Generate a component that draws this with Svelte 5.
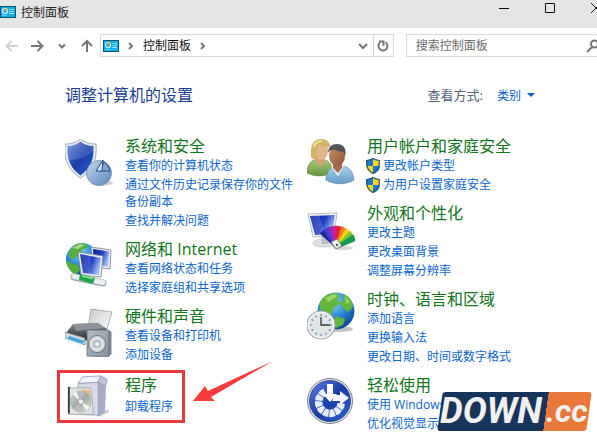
<script>
  const left = [
    { title: '系统和安全', icon: 'security', links: ['查看你的计算机状态', '通过文件历史记录保存你的文件备份副本', '查找并解决问题'] },
    { title: '网络和 Internet', icon: 'network', links: ['查看网络状态和任务', '选择家庭组和共享选项'] },
    { title: '硬件和声音', icon: 'hardware', links: ['查看设备和打印机', '添加设备'] },
    { title: '程序', icon: 'programs', links: ['卸载程序'], marked: true }
  ];
  const right = [
    { title: '用户帐户和家庭安全', icon: 'users', links: ['更改帐户类型', '为用户设置家庭安全'], admin: true },
    { title: '外观和个性化', icon: 'appearance', links: ['更改主题', '更改桌面背景', '调整屏幕分辨率'] },
    { title: '时钟、语言和区域', icon: 'clock', links: ['添加语言', '更换输入法', '更改日期、时间或数字格式'] },
    { title: '轻松使用', icon: 'ease', links: ['使用 Windows 建议的设置', '优化视觉显示'] }
  ];
  const columns = [left, right];
  const swatches = ['#1f2a9c', '#3c3fd0', '#8a2cc4', '#d01f96', '#e3222c', '#f07a16', '#efd51b', '#7fc92a', '#159c4c'];
  const spokes = [110, 140, 170, 200, 230, 260, 290, 320];
  const ticks = [0, 30, 60, 90, 120, 150, 180, 210, 240, 270, 300, 330];
</script>

{#snippet panelIcon()}
  <svg class="panel-icon" viewBox="0 0 16 12" aria-hidden="true">
    <rect x=".5" y=".5" width="15" height="11" fill="#12b0ec" stroke="#0b5277" />
    <circle cx="5" cy="5" r="2.5" fill="none" stroke="#d8f5ff" stroke-width="1.2" />
    <path d="M5 5V2.300A2.700 2.700 0 0 1 7.700 5z" fill="#e8a33c" />
    <path d="M9.500 3.500h1M11.500 3.500h2M9.500 5.500h1M11.500 5.500h2M9.500 7.500h4M3 9.500h1.500M5.500 9.500h1" stroke="#c9f1ff" />
  </svg>
{/snippet}

{#snippet bigIcon(name)}
  <svg class="big-icon" viewBox="0 0 48 48" aria-hidden="true">
    {#if name === 'security'}
      <ellipse cx="37" cy="44" rx="11" ry="3" fill="#999" opacity=".4" />
      <path d="M15.500 0C11 4 6 5 0 5c-1 15 2 25 15.500 34C29 30 32 20 31 5c-5 0-11-1-15.500-5z" fill="#e9edf2" stroke="#8994a6" stroke-width=".8" />
      <path d="M15.500 2.500C12 5.500 7.500 7 2.500 7c-.5 14 2.500 21.500 13 29.500 10.500-8 13.500-15.500 13-29.500-4.500 0-9.500-1.500-13-4.500z" fill="url(#blue)" />
      <path d="M15.500 2.500C12 5.500 7.500 7 2.500 7c-.2 6 .2 10 1.500 14 9 0 17-3 24.300-9V7c-4 0-9.300-1.500-12.800-4.500z" fill="#fff" opacity=".15" />
      <circle cx="34" cy="34" r="12.500" fill="url(#steel)" stroke="#607fab" stroke-width=".7" />
      <path d="M35 32l4-9c3 2 5 5 6 9z" fill="#7fa5d6" stroke="#28488a" />
      <path d="M31 32l7-11-1 11z" fill="#dce9f7" stroke="#28488a" />
    {:else if name === 'network'}
      <circle cx="17" cy="17" r="16" fill="url(#globe)" />
      <path d="M4 9l7-7 8-1 4 4-6 3-1 5-6 3-5 1zM1 18l7 4 5 1 2 5-4 5C5 30 2 25 1 18z" fill="#57ad3c" />
      <path d="M7 6l8-4 5 1-7 4z" fill="#c5eda2" opacity=".7" />
      <path d="M26 5l20 3-1 19-17-2z" fill="#e6eaee" stroke="#78838e" stroke-width=".8" />
      <path d="M28 7l16 2.500-1 15L29 23z" fill="url(#screen)" />
      <path d="M13 10l25 4-2 21-20-2z" fill="#edf0f3" stroke="#78838e" stroke-width=".8" />
      <path d="M15 12l21 4-2 17-16-2z" fill="url(#screen)" />
      <path d="M15 12l11 2-1 18-7-1z" fill="#fff" opacity=".15" />
      <path d="M9 35l29 6" stroke="#a2aab0" stroke-width="7" stroke-linecap="round" />
      <path d="M9 34.500l29 6" stroke="#e9eef0" stroke-width="5" stroke-linecap="round" />
      <path d="M15 32l15 4-2 6-14-4z" fill="#1fa64a" />
      <path d="M17 34l11 2.500" stroke="#90e6a0" stroke-width="1.500" />
    {:else if name === 'hardware'}
      <path d="M26 0l21 3-6 20-18-3z" fill="url(#paper)" stroke="#989fa5" stroke-width=".8" />
      <path d="M8 15l25-1 9 6-2 9-24 3L1 24z" fill="url(#dark)" />
      <path d="M8 15l25-1 7 5-29 3z" fill="#8d9398" />
      <path d="M0 23l20 6v7L0 29z" fill="#d3d8dc" stroke="#62696e" stroke-width=".6" />
      <path d="M4 27l16 5-4 4-14-5z" fill="#42a8de" />
      <path d="M2 31l15 5" stroke="#eee" stroke-width="2" />
      <path d="M22 21h21l3 2v22l-3 3-21-1z" fill="url(#speaker)" stroke="#646f79" stroke-width=".8" />
      <path d="M43 21l3 2v22l-3 3z" fill="#7a858f" />
      <circle cx="32" cy="35" r="8.500" fill="#d6dce0" stroke="#66727c" />
      <circle cx="32" cy="35" r="5" fill="#b4bdc4" stroke="#eef1f3" />
      <circle cx="32" cy="35" r="2" fill="#f2f4f5" />
    {:else if name === 'programs'}
      <path d="M32 44l14-7-1 4-9 4z" fill="#aaa" opacity=".6" />
      <path d="M12 9l22-1 1 36-23-1z" fill="#d9d9ee" stroke="#9498b4" stroke-width=".8" />
      <path d="M34 8l8 4-1 28-7 5z" fill="#a9abc9" stroke="#9094b1" stroke-width=".6" />
      <path d="M12 9l5-7 20-1-3 7z" fill="#f2f2fd" stroke="#8b90af" stroke-width=".8" />
      <path d="M37 1l7 4-2 7-8-4z" fill="#c3c4dd" stroke="#8b90af" stroke-width=".8" />
      <path d="M2 14h24l3 29H2z" fill="#dce3df" fill-opacity=".88" stroke="#969d98" stroke-width=".8" />
      <path d="M2 13v29" stroke="#30343a" stroke-width="2" />
      <path d="M17 15l8 2 1 8-7-3z" fill="#edbb7c" />
      <circle cx="15" cy="29" r="11.500" fill="url(#disc)" stroke="#a7b0ad" stroke-width=".6" />
      <path d="M15 29L6 21l4-3zM15 29l10 6-4 4z" fill="#fff" opacity=".8" />
      <path d="M15 29l-1-11 5 1zM15 29l-3 11-5-3z" fill="#d6bada" opacity=".6" />
      <circle cx="15" cy="29" r="3" fill="#eef1ef" stroke="#8e9994" />
    {:else if name === 'users'}
      <path d="M0 32c1-8 5-12 13-12s12 5 13 13c-8 5-18 5-26 1z" fill="url(#green)" stroke="#638049" stroke-width=".6" />
      <path d="M9 17h8v7l-4 4-4-4z" fill="#d4a276" />
      <ellipse cx="14" cy="12" rx="7" ry="9" fill="#e1b68b" />
      <path d="M4 18C3 5 7 0 14 0c6 0 9 3 9 8-6 0-9-2-11-3-2 4-2 8-1 15-3 1-5 1-7-2z" fill="#d0b466" />
      <path d="M7 8c1-4 4-6 8-6" stroke="#f4e29b" fill="none" stroke-width="2" />
      <path d="M19 41c0-9 4-14 14-14 9 0 13 5 14 14-8 5-20 5-28 0z" fill="url(#shirt)" stroke="#56809d" stroke-width=".6" />
      <path d="M24 28l7 9 6-10z" fill="#ecf2f6" />
      <path d="M26 23h9v6l-4 5-5-5z" fill="#a76d48" />
      <ellipse cx="30" cy="17" rx="8" ry="10" fill="url(#skin)" />
      <path d="M21 14c0-6 4-9 9-9 7 0 10 5 8 12l-2-4c-6 0-8-3-10-2-3 0-4 1-5 3z" fill="#555" />
    {:else if name === 'appearance'}
      <ellipse cx="17" cy="37" rx="11" ry="4" fill="#dfe1e3" stroke="#adb1b5" stroke-width=".6" />
      <path d="M14 29l9 1-2 8h-6z" fill="#b9bfc5" />
      <path d="M1 8l29-1-3 23-21 1z" fill="#f0f2f4" stroke="#a5abb1" stroke-width=".8" />
      <path d="M3 10l25-1-3 19-17 1z" fill="url(#screen)" />
      <path d="M3 10l9-.5 7 18.500-11 1z" fill="#fff" opacity=".15" />
      <ellipse cx="36" cy="42" rx="10" ry="2" fill="#999" opacity=".4" />
      {#each swatches as colour, i}
        <path d="M28 41l-2-21h7l-2 21z" fill={colour} transform={`rotate(${i * 13 - 42} 29 41)`} />
      {/each}
      <path d="M24 36l6-3 5 7-6 3z" fill="#f4f4f4" stroke="#666" stroke-width=".8" />
      <circle cx="30" cy="39" r="1.200" fill="#555" />
    {:else if name === 'clock'}
      <ellipse cx="32" cy="37" rx="14" ry="3" fill="#888" opacity=".5" />
      <circle cx="29" cy="19" r="18.500" fill="url(#globe)" />
      <path d="M13 11c2-6 8-10 15-10l5 3-3 4 3 3-7 6-2 8-6-4-5-4zM37 2c5 2 8 7 9 13l-5 5-5-4-4-5 5-3zM29 24l9 3-2 6-7 3-3-6z" fill="#61b63c" />
      <path d="M18 6l9-4 4 2-10 6zM38 4l5 6-4 2z" fill="#b2df72" opacity=".7" />
      <circle cx="14" cy="33" r="14" fill="#f3f5f6" stroke="#a1a8ad" stroke-width="1.200" />
      <circle cx="14" cy="33" r="12" fill="#dfe6e8" />
      {#each ticks as angle}
        <path d="M14 22v2" stroke="#62686c" transform={`rotate(${angle} 14 33)`} />
      {/each}
      <path d="M14 25v8h9" fill="none" stroke="#30363b" stroke-width="1.300" />
    {:else}
      <circle cx="23" cy="23" r="22.500" fill="#e3e7ec" stroke="#6f7480" stroke-width=".9" />
      <circle cx="23" cy="23" r="20.500" fill="url(#blue)" stroke="#162d75" stroke-width=".7" />
      {#each spokes as angle}
        <path d="M19.500 9.500q3.500-1.500 7 0L24.700 16.500h-3.400z" fill="#e7edf5" transform={`rotate(${angle} 23 24)`} />
      {/each}
      <path d="M20 6h6v10h4l-7 8-7-8h4z" fill="#fff" />
      <path d="M28 17h5v-4l9 7-9 7v-4h-8z" fill="#f4f7fb" />
    {/if}
  </svg>
{/snippet}

<svg class="defs" aria-hidden="true">
  <defs>
    <linearGradient id="blue" x2="1" y2="1"><stop stop-color="#5f86df" /><stop offset=".5" stop-color="#1a3ca8" /><stop offset="1" stop-color="#2e65d2" /></linearGradient>
    <linearGradient id="steel" x2="1" y2="1"><stop stop-color="#c4d7ed" /><stop offset="1" stop-color="#5c86bd" /></linearGradient>
    <radialGradient id="globe" cx=".4" cy=".25" r=".8"><stop stop-color="#8fdcf8" /><stop offset=".5" stop-color="#2f8bd5" /><stop offset="1" stop-color="#093f91" /></radialGradient>
    <linearGradient id="screen" x2="1" y2=".4"><stop stop-color="#071e96" /><stop offset=".6" stop-color="#2440c9" /><stop offset="1" stop-color="#9fbbef" /></linearGradient>
    <linearGradient id="paper" x2="1" y2="1"><stop stop-color="#c6cacd" /><stop offset="1" stop-color="#fff" /></linearGradient>
    <linearGradient id="dark" x2="0" y2="1"><stop stop-color="#858b91" /><stop offset="1" stop-color="#25292d" /></linearGradient>
    <linearGradient id="speaker" x2="1" y2="1"><stop stop-color="#b3bdc6" /><stop offset="1" stop-color="#818e99" /></linearGradient>
    <linearGradient id="disc" x2="1" y2="1"><stop stop-color="#cbd6cf" /><stop offset=".5" stop-color="#9eaaa3" /><stop offset="1" stop-color="#dce5dd" /></linearGradient>
    <linearGradient id="green" x2="0" y2="1"><stop stop-color="#a9ca7b" /><stop offset="1" stop-color="#66963c" /></linearGradient>
    <linearGradient id="shirt" x2="0" y2="1"><stop stop-color="#abd1ec" /><stop offset="1" stop-color="#649cc7" /></linearGradient>
    <linearGradient id="skin" x2="1" y2="1"><stop stop-color="#cb946a" /><stop offset="1" stop-color="#8b5233" /></linearGradient>
  </defs>
</svg>

<div class="window">
  <header class="titlebar">
    {@render panelIcon()}
    <span class="caption">控制面板</span>
    <div class="controls">
      <button aria-label="最小化"><svg viewBox="0 0 12 12"><path d="M1 6.500h10" /></svg></button>
      <button aria-label="最大化"><svg viewBox="0 0 12 12"><path d="M1.500 1.500h9v9h-9z" /></svg></button>
      <button aria-label="关闭"><svg viewBox="0 0 12 12"><path d="M1 1l10 10M11 1L1 11" /></svg></button>
    </div>
  </header>

  <nav class="toolbar">
    <div class="history">
      <button class="off" aria-label="后退"><svg viewBox="0 0 14 14"><path d="M13 7H2M6.500 2L1.500 7l5 5" /></svg></button>
      <button aria-label="前进"><svg viewBox="0 0 14 14"><path d="M1 7h11M7.500 2l5 5-5 5" /></svg></button>
      <button class="recent" aria-label="最近浏览的位置"><svg viewBox="0 0 14 14"><path d="M4 5.500l3 3 3-3" /></svg></button>
      <button aria-label="上移"><svg viewBox="0 0 14 14"><path d="M7 13V2M2 7l5-5 5 5" /></svg></button>
    </div>
    <div class="address">
      {@render panelIcon()}
      <svg class="crumb" viewBox="0 0 8 8"><path d="M2 1l3 3-3 3" /></svg>
      <a href="#panel">控制面板</a>
      <svg class="crumb" viewBox="0 0 8 8"><path d="M2 1l3 3-3 3" /></svg>
      <button class="drop" aria-label="以前的位置"><svg viewBox="0 0 14 14"><path d="M3 5l4 4 4-4" /></svg></button>
      <button class="refresh" aria-label="刷新"><svg viewBox="0 0 14 14"><path d="M4 3.500A4.500 4.500 0 1 0 9.500 3.200M3 2.500h4.500V7" /></svg></button>
    </div>
    <div class="search">
      <input type="search" aria-label="搜索控制面板" placeholder="搜索控制面板" />
      <svg viewBox="0 0 14 14" aria-hidden="true"><circle cx="8.500" cy="5" r="3.500" /><path d="M6 8l-5 5" /></svg>
    </div>
  </nav>

  <main>
    <div class="heading">
      <h1>调整计算机的设置</h1>
      <label for="view">查看方式:</label>
      <span class="picker">
        <select id="view"><option>类别</option><option>大图标</option><option>小图标</option></select>
        <svg viewBox="0 0 8 4" aria-hidden="true"><path d="M0 0h8L4 4z" /></svg>
      </span>
    </div>

    <div class="columns">
      {#each columns as groups}
        <div class="column">
          {#each groups as group}
            <section class:marked={group.marked}>
              {@render bigIcon(group.icon)}
              <div class="text">
                <h2><a href="#{group.icon}">{group.title}</a></h2>
                <ul>
                  {#each group.links as link}
                    <li class:admin={group.admin}>
                      {#if group.admin}
                        <svg class="uac" viewBox="0 0 14 16" aria-hidden="true">
                          <path d="M7 0C5 1.500 3 2 0 2c0 7 1 11 7 14z" fill="#1b77c8" />
                          <path d="M7 0c2 1.500 4 2 7 2 0 7-1 11-7 14z" fill="#f6d62c" />
                          <path d="M0 8c.5 4 2.500 6.500 7 8V8z" fill="#f6d62c" />
                          <path d="M14 8c-.5 4-2.500 6.500-7 8V8z" fill="#1b77c8" />
                          <path d="M7 .6C5 2 3 2.500.6 2.500 .6 9 1.500 12.500 7 15.400 12.500 12.500 13.400 9 13.400 2.500 11 2.500 9 2 7 .6z" fill="none" stroke="#24577f" stroke-width="1.200" />
                        </svg>
                      {/if}
                      <a href="#{link}">{link}</a>
                    </li>
                  {/each}
                </ul>
              </div>
            </section>
          {/each}
        </div>
      {/each}
    </div>
  </main>

  <svg class="arrow" viewBox="0 0 80 42" aria-hidden="true"><path d="M0 40L12 25l3 5L80 0 18 36l4 4z" fill="#fb3b3b" /></svg>

  <div class="stamp"><span class="down">DOWN</span><span class="cc">.cc</span></div>
</div>

<style>
  :global(body) { background: #fff; }
  .window {
    position: relative;
    min-height: 100vh;
    overflow: hidden;
    box-sizing: border-box;
    background: #fff;
    color: #222;
    font: 12px/17px "Open Sans", "Noto Sans CJK SC", sans-serif;
  }
  .defs { position: absolute; width: 0; height: 0; }
  button { display: grid; place-items: center; padding: 0; border: 0; background: none; }
  svg { display: block; flex: none; }
  a { color: inherit; text-decoration: none; }
  a:hover { text-decoration: underline; }
  h1, h2, ul { margin: 0; padding: 0; font-weight: 400; list-style: none; }
  .panel-icon { width: 16px; height: 12px; }

  .titlebar { display: flex; height: 28px; background: #e5e5e5; }
  .titlebar .panel-icon { margin-top: 6px; }
  .caption { margin: 4px 0 0 5px; }
  .controls { display: flex; height: 16px; margin: 0 -22px 0 auto; }
  .controls button { width: 46px; }
  .controls svg { width: 12px; height: 12px; fill: none; stroke: #111; }

  .toolbar { display: flex; height: 23px; padding-top: 6px; }
  .history { display: flex; justify-content: space-between; align-items: center; width: 89px; margin: 0 6px 0 5px; }
  .history svg, .drop svg, .refresh svg { width: 14px; height: 14px; fill: none; stroke: #777; stroke-width: 2; }
  .history .off svg { stroke: #d0d0d0; }
  .address { display: flex; flex: 3; align-items: center; box-sizing: border-box; border: 1px solid #d9d9d9; padding-left: 2px; color: #111; }
  .crumb { width: 8px; height: 8px; margin: 0 8px; fill: none; stroke: #777; stroke-width: 2; }
  .drop { width: 20px; height: 21px; margin-left: auto; }
  .refresh { width: 20px; height: 21px; border-left: 1px solid #d9d9d9; }
  .search { display: flex; flex: 2; align-items: center; box-sizing: border-box; min-width: 0; margin: 0 -4px 0 12px; border: 1px solid #d9d9d9; }
  .search input { flex: 1; min-width: 0; padding: 0 9px; border: 0; outline: 0; background: none; font: inherit; }
  .search input::placeholder { color: #6d6d6d; opacity: 1; }
  .search svg { width: 14px; height: 14px; fill: none; stroke: #777; stroke-width: 2; }

  main { padding: 27px 60px 0 65px; }
  .heading { display: flex; align-items: center; height: 22px; margin-bottom: 29px; }
  h1 { flex: 1; color: #1a3c94; font-size: 16px; line-height: 22px; }
  label { margin-right: 14px; color: #52627a; font-size: 13px; }
  .picker { display: flex; align-items: center; gap: 5px; margin-right: 2px; }
  select { appearance: none; padding: 0; border: 0; width: 25px; background: none; color: #0a61c9; font: inherit; }
  .picker svg { width: 8px; height: 4px; fill: #0a61c9; }

  .columns { display: grid; grid-template-columns: 1fr 1fr; gap: 12px; }
  .column { display: flex; flex-direction: column; gap: 9px; }
  section { display: flex; gap: 12px; }
  .big-icon { width: 48px; height: 48px; margin-top: 4px; }
  .text { min-width: 0; }
  h2 { color: #11751c; font-size: 16px; line-height: 22px; }
  ul { display: grid; gap: 2px; color: #0a66cc; }
  li { line-height: 17px; }
  .admin { display: flex; align-items: center; gap: 3px; margin-left: -1px; }
  .uac { width: 14px; height: 16px; }
  .marked { align-self: start; margin: -2px 0 0 -8px; padding: 1px 9px 1px 5px; border: 3px solid #e8383d; }
  .marked .big-icon { height: 44px; margin-top: 1px; }
  .marked h2 { margin-bottom: 2px; }

  .arrow { position: absolute; left: 193px; top: 361px; width: 80px; height: 42px; }
  .stamp {
    position: absolute;
    left: 440px;
    top: 392px;
    display: flex;
    width: 149px;
    height: 39px;
    color: #f1f1f1;
    font: italic bold 36px/39px Roboto, sans-serif;
  }
  .stamp::before {
    content: "";
    position: absolute;
    inset: 0;
    z-index: -1;
    transform: skewX(-8deg);
    border-radius: 3px;
    background: linear-gradient(90deg, #17345b 106px, #e8793a 106px);
  }
  .stamp { z-index: 1; }
  .down { width: 106px; }
  .cc { font-size: 32px; }
</style>
